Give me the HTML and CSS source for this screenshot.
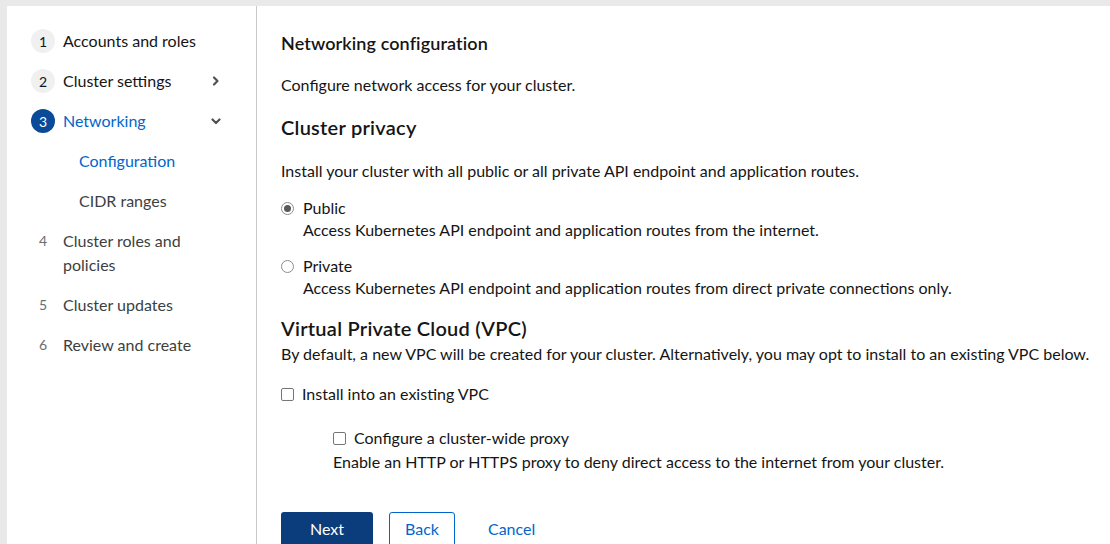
FILE: index.html
```html
<!DOCTYPE html>
<html lang="en">
<head>
<meta charset="utf-8">
<title>Networking configuration</title>
<link rel="stylesheet" href="styles.css">
</head>
<body>
<div class="page">
  <div class="card">
    <nav class="wizard-nav">
      <ol class="steps">
        <li class="step">
          <div class="step-link"><span class="num circle">1</span><span class="label">Accounts and roles</span></div>
        </li>
        <li class="step">
          <div class="step-link"><span class="num circle">2</span><span class="label">Cluster settings</span>
            <svg class="toggle" width="16" height="16" viewBox="0 0 16 16"><path d="M6 4.5 L9.5 8 L6 11.5" fill="none" stroke="#4f5255" stroke-width="2.2" stroke-linecap="round" stroke-linejoin="round"/></svg>
          </div>
        </li>
        <li class="step">
          <div class="step-link current"><span class="num circle active">3</span><span class="label">Networking</span>
            <svg class="toggle" width="16" height="16" viewBox="0 0 16 16"><path d="M4.5 6.5 L8 10 L11.5 6.5" fill="none" stroke="#4f5255" stroke-width="2.2" stroke-linecap="round" stroke-linejoin="round"/></svg>
          </div>
          <ol class="substeps">
            <li class="substep current">Configuration</li>
            <li class="substep">CIDR ranges</li>
          </ol>
        </li>
        <li class="step">
          <div class="step-link muted"><span class="num">4</span><span class="label">Cluster roles and policies</span></div>
        </li>
        <li class="step">
          <div class="step-link muted"><span class="num">5</span><span class="label">Cluster updates</span></div>
        </li>
        <li class="step">
          <div class="step-link muted"><span class="num">6</span><span class="label">Review and create</span></div>
        </li>
      </ol>
    </nav>
    <main class="content">
      <h1 class="title">Networking configuration</h1>
      <p class="intro">Configure network access for your cluster.</p>
      <h2 class="section privacy">Cluster privacy</h2>
      <p class="section-text">Install your cluster with all public or all private API endpoint and application routes.</p>
      <div class="radio-group">
        <div class="choice">
          <span class="radio checked"></span>
          <div class="choice-body">
            <div class="choice-label">Public</div>
            <div class="choice-desc">Access Kubernetes API endpoint and application routes from the internet.</div>
          </div>
        </div>
        <div class="choice second">
          <span class="radio"></span>
          <div class="choice-body">
            <div class="choice-label">Private</div>
            <div class="choice-desc">Access Kubernetes API endpoint and application routes from direct private connections only.</div>
          </div>
        </div>
      </div>
      <h2 class="section vpc">Virtual Private Cloud (VPC)</h2>
      <p class="vpc-text">By default, a new VPC will be created for your cluster. Alternatively, you may opt to install to an existing VPC below.</p>
      <div class="check-row first">
        <span class="checkbox"></span>
        <span class="check-label">Install into an existing VPC</span>
      </div>
      <div class="proxy">
        <div class="check-row">
          <span class="checkbox"></span>
          <span class="check-label">Configure a cluster-wide proxy</span>
        </div>
        <div class="proxy-desc">Enable an HTTP or HTTPS proxy to deny direct access to the internet from your cluster.</div>
      </div>
      <div class="actions">
        <button class="btn primary">Next</button>
        <button class="btn secondary">Back</button>
        <button class="btn link">Cancel</button>
      </div>
    </main>
  </div>
</div>
</body>
</html>
```

FILE: styles.css
```css
* { box-sizing: border-box; }
html, body { margin: 0; padding: 0; }
body {
  background: #e8e9e8;
  font-family: Lato, "Liberation Sans", sans-serif;
  font-size: 16px;
  color: #151515;
  overflow: hidden;
  height: 544px;
}
.page {
  padding: 6px 0 0 7px;
  height: 544px;
}
.card {
  background: #fff;
  display: flex;
  height: 100%;
}
.wizard-nav {
  width: 250px;
  flex: 0 0 250px;
  border-right: 1px solid #c9c9c9;
  padding: 23px 32px 0 24px;
}
.steps, .substeps {
  list-style: none;
  margin: 0;
  padding: 0;
}
.steps { display: flex; flex-direction: column; gap: 16px; }
.step-link {
  display: flex;
  align-items: flex-start;
  line-height: 24px;
  color: #151515;
}
.num {
  width: 24px;
  height: 24px;
  flex: 0 0 24px;
  text-align: center;
  line-height: 24px;
  font-size: 14px;
  margin-right: 8px;
  color: #6a6e73;
}
.num.circle {
  border-radius: 50%;
  background: #f0f0f0;
  color: #151515;
  line-height: 25px;
}
.num.active {
  background: #0a4a98;
  color: #fff;
}
.label { flex: 1; }
.current { color: #0066cc; }
.muted { color: #3c3f42; }
.toggle { flex: 0 0 16px; margin-top: 4px; }
.substeps {
  margin-top: 16px;
  padding-left: 48px;
  display: flex;
  flex-direction: column;
  gap: 16px;
}
.substep { line-height: 24px; color: #3c3f42; }
.substep.current { color: #0066cc; }

.content {
  flex: 1;
  padding: 24px 0 0 24px;
}
.title {
  margin: 0;
  font-size: 18px;
  font-weight: 600;
  line-height: 27px;
  letter-spacing: 0.1px;
}
.intro { margin: 16px 0 0; line-height: 24px; }
.section {
  margin: 0;
  font-size: 20px;
  font-weight: 600;
  line-height: 26px;
  letter-spacing: 0.25px;
}
.privacy { margin-top: 17px; }
.section-text { margin: 19px 0 0; line-height: 24px; }
.radio-group { margin-top: 13px; }
.choice { display: flex; align-items: flex-start; }
.choice.second { margin-top: 14px; }
.radio {
  width: 13px;
  height: 13px;
  flex: 0 0 13px;
  border: 1px solid #8a8d90;
  border-radius: 50%;
  margin: 6px 9px 0 0;
  position: relative;
}
.radio.checked::after {
  content: "";
  position: absolute;
  left: 2px; top: 2px;
  width: 7px; height: 7px;
  border-radius: 50%;
  background: #58595b;
}
.choice-label { line-height: 24px; }
.choice-desc { line-height: 20px; }
.vpc { margin-top: 17px; }
.vpc-text { margin: 1px 0 0; line-height: 24px; }
.check-row { display: flex; align-items: center; line-height: 24px; }
.check-row.first { margin-top: 16px; }
.checkbox {
  width: 13px;
  height: 13px;
  flex: 0 0 13px;
  border: 1px solid #767676;
  border-radius: 2px;
  margin-right: 8px;
}
.proxy { margin: 20px 0 0 52px; }
.proxy-desc { line-height: 24px; }
.actions {
  margin-top: 38px;
  display: flex;
  gap: 16px;
}
.btn {
  font-family: inherit;
  font-size: 16px;
  line-height: 24px;
  padding: 6px 16px;
  border-radius: 3px;
  border: 1px solid transparent;
  background: none;
  cursor: pointer;
}
.btn.primary {
  background: #0b3d7d;
  color: #fff;
  padding: 4px 28px 6px;
}
.btn.secondary {
  border-color: #0066cc;
  color: #0066cc;
  padding: 4px 15px 6px;
}
.btn.link { color: #0066cc; padding: 4px 16px 6px; }
```
